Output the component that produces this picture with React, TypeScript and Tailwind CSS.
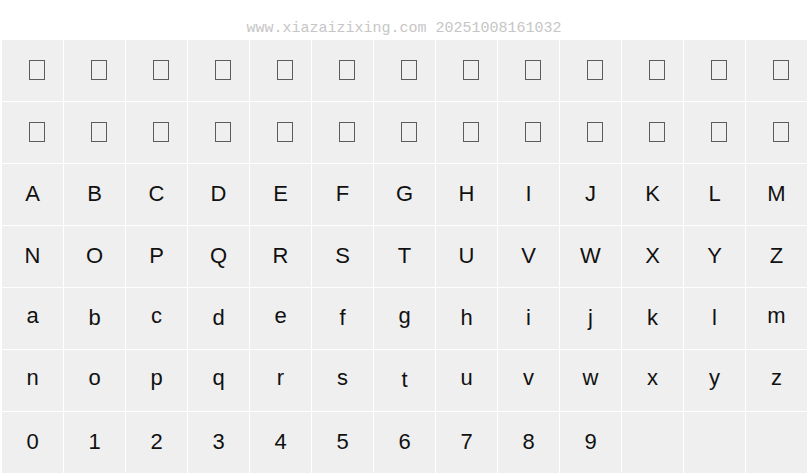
const rows: (string | null)[][] = [
  Array(13).fill("tofu"),
  Array(13).fill("tofu"),
  "ABCDEFGHIJKLM".split(""),
  "NOPQRSTUVWXYZ".split(""),
  "abcdefghijklm".split(""),
  "nopqrstuvwxyz".split(""),
  [..."0123456789".split(""), null, null, null],
];

// glyphs whose ink starts at cap height
const tall = "ABCDEFGHIJKLMNOPQRSTUVWXYZ0123456789bdfhijklt";

const Cell = ({ ch }: { ch: string | null }) => {
  if (ch === "tofu") {
    return (
      <div className="flex justify-center bg-[#efefef] pt-5">
        <div className="ml-2 h-5 w-4 border border-[#5c5c5c]" />
      </div>
    );
  }
  if (!ch) return <div className="bg-[#efefef]" />;
  return (
    <div
      className={
        tall.includes(ch)
          ? "flex justify-center bg-[#efefef] pt-[19px]"
          : "flex justify-center bg-[#efefef] pt-[17px]"
      }
    >
      <span className="text-[22px] leading-none text-[#111]">{ch}</span>
    </div>
  );
};

export default function App() {
  return (
    <div
      className="h-[476px] w-[808px] overflow-hidden bg-white"
      style={{ fontFamily: '"Liberation Sans", Arial, sans-serif' }}
    >
      <div
        className="h-10 pt-[21px] text-center text-[15px] leading-none text-[#c6c6c6]"
        style={{ fontFamily: '"Liberation Mono", "Courier New", monospace' }}
      >
        www.xiazaizixing.com 20251008161032
      </div>
      <div className="grid grid-cols-[repeat(13,61px)] auto-rows-[61px] gap-px pl-[2px]">
        {rows.map((row, r) =>
          row.map((ch, c) => <Cell key={`${r}-${c}`} ch={ch} />)
        )}
      </div>
    </div>
  );
}
